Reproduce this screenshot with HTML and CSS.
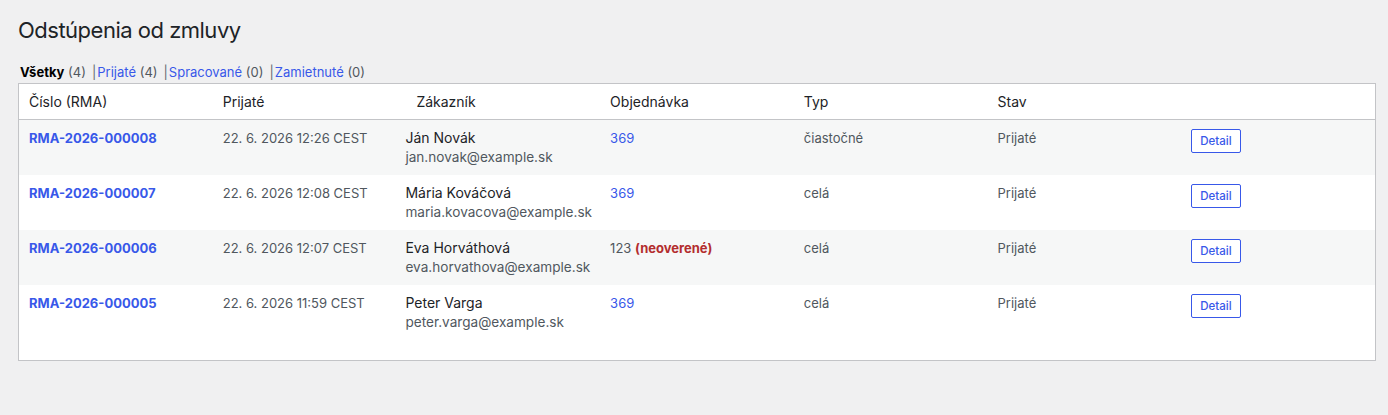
FILE: index.html
```html
<!DOCTYPE html>
<html lang="sk">
<head>
<meta charset="utf-8">
<title>Odstúpenia od zmluvy</title>
<link rel="stylesheet" href="styles.css">
</head>
<body>
<div class="wrap">
  <h1 class="page-title">Odstúpenia od zmluvy</h1>
  <div class="views"><a class="current">Všetky</a> <span class="count">(4)</span><span class="sep">|</span><a href="#">Prijaté</a> <span class="count">(4)</span><span class="sep">|</span><a href="#">Spracované</a> <span class="count">(0)</span><span class="sep">|</span><a href="#">Zamietnuté</a> <span class="count">(0)</span></div>
  <div class="table-box">
    <table class="list">
      <thead>
        <tr>
          <th>Číslo (RMA)</th>
          <th>Prijaté</th>
          <th>Zákazník</th>
          <th>Objednávka</th>
          <th>Typ</th>
          <th>Stav</th>
          <th></th>
        </tr>
      </thead>
      <tbody>
        <tr class="alt">
          <td><a class="rma" href="#">RMA-2026-000008</a></td>
          <td class="muted">22. 6. 2026 12:26 CEST</td>
          <td class="cust"><div class="name">Ján Novák</div><div class="email">jan.novak@example.sk</div></td>
          <td><a class="order" href="#">369</a></td>
          <td class="muted">čiastočné</td>
          <td class="muted">Prijaté</td>
          <td><a class="btn" href="#">Detail</a></td>
        </tr>
        <tr>
          <td><a class="rma" href="#">RMA-2026-000007</a></td>
          <td class="muted">22. 6. 2026 12:08 CEST</td>
          <td class="cust"><div class="name">Mária Kováčová</div><div class="email">maria.kovacova@example.sk</div></td>
          <td><a class="order" href="#">369</a></td>
          <td class="muted">celá</td>
          <td class="muted">Prijaté</td>
          <td><a class="btn" href="#">Detail</a></td>
        </tr>
        <tr class="alt">
          <td><a class="rma" href="#">RMA-2026-000006</a></td>
          <td class="muted">22. 6. 2026 12:07 CEST</td>
          <td class="cust"><div class="name">Eva Horváthová</div><div class="email">eva.horvathova@example.sk</div></td>
          <td class="muted">123 <strong class="warn">(neoverené)</strong></td>
          <td class="muted">celá</td>
          <td class="muted">Prijaté</td>
          <td><a class="btn" href="#">Detail</a></td>
        </tr>
        <tr>
          <td><a class="rma" href="#">RMA-2026-000005</a></td>
          <td class="muted">22. 6. 2026 11:59 CEST</td>
          <td class="cust"><div class="name">Peter Varga</div><div class="email">peter.varga@example.sk</div></td>
          <td><a class="order" href="#">369</a></td>
          <td class="muted">celá</td>
          <td class="muted">Prijaté</td>
          <td><a class="btn" href="#">Detail</a></td>
        </tr>
      </tbody>
    </table>
  </div>
</div>
</body>
</html>
```

FILE: styles.css
```css
html, body {
  margin: 0;
  padding: 0;
  background: #f0f0f1;
}
body {
  font-family: Inter, "Noto Sans", "Liberation Sans", sans-serif;
  color: #1d2327;
  font-size: 13px;
}
.wrap {
  padding: 6px 12px 0 18px;
}
.page-title {
  margin: 0;
  padding: 9px 0 4px;
  font-size: 22px;
  letter-spacing: -0.5px;
  font-weight: 400;
  line-height: 30px;
  color: #1d2327;
}
.views {
  margin: 13px 0 0 0;
  padding: 0 0 0 2px;
  font-size: 13px;
  line-height: 20px;
  white-space: pre;
  color: #50575e;
}
.views a {
  color: #3858e9;
  text-decoration: none;
}
.views a.current {
  color: #000;
  font-weight: 700;
}
.count {
  color: #50575e;
}
.sep {
  color: #646970;
  padding: 0 1px 0 6px;
}
.table-box {
  margin-top: 1px;
  background: #fff;
  border: 1px solid #c3c4c7;
  padding-bottom: 20px;
}
.list {
  width: 100%;
  border-collapse: collapse;
  table-layout: fixed;
}
.list th {
  text-align: left;
  font-weight: 400;
  font-size: 14px;
  line-height: 19px;
  padding: 8px 10px;
  height: 19px;
  color: #1d2327;
  border-bottom: 1px solid #c3c4c7;
}
.list td {
  vertical-align: top;
  padding: 8px 10px 7px;
  font-size: 13px;
  line-height: 20px;
  height: 40px;
}
.list tr.alt td {
  background: #f6f7f7;
}
.muted {
  color: #50575e;
}
.rma {
  color: #3858e9;
  font-weight: 700;
  text-decoration: none;
}
.order {
  color: #3858e9;
  text-decoration: none;
}
.warn {
  color: #b32d2e;
  font-weight: 700;
}
.list td.cust {
  padding-left: 0;
}
.name {
  font-size: 14px;
  line-height: 19px;
  color: #1d2327;
  margin-left: -1px;
}
.email {
  font-size: 13.6px;
  line-height: 20px;
  color: #50575e;
  margin-left: -1px;
}
.btn {
  display: inline-block;
  vertical-align: top;
  margin-top: 1px;
  padding: 0 8px;
  height: 22px;
  line-height: 22px;
  border: 1px solid #3858e9;
  border-radius: 2px;
  color: #3858e9;
  font-size: 11.5px;
  font-weight: 500;
  text-decoration: none;
  background: #fff;
}
```
